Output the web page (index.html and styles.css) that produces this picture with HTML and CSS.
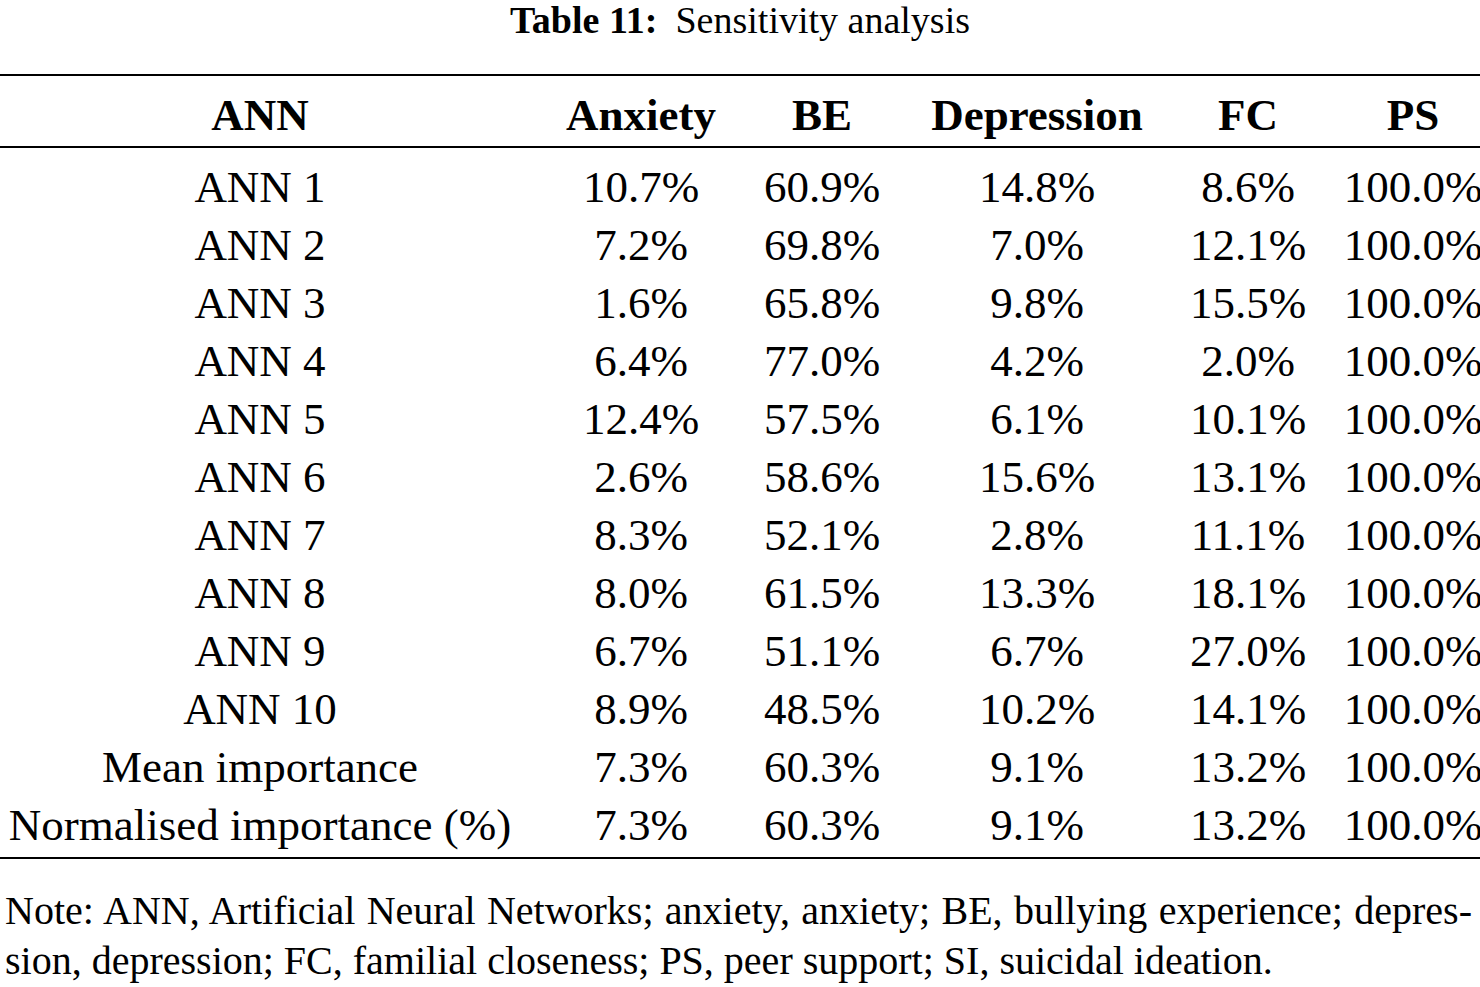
FILE: index.html
```html
<!DOCTYPE html>
<html lang="en">
<head>
<meta charset="utf-8">
<title>Table 11: Sensitivity analysis</title>
<link rel="stylesheet" href="styles.css">
</head>
<body>
<div class="title"><span class="label">Table 11:</span><span class="caption">Sensitivity analysis</span></div>
<div class="table">
  <div class="row head">
    <div class="cell">ANN</div><div class="cell">Anxiety</div><div class="cell">BE</div><div class="cell">Depression</div><div class="cell">FC</div><div class="cell last">PS</div>
  </div>
  <div class="body">
    <div class="row"><div class="cell">ANN 1</div><div class="cell">10.7%</div><div class="cell">60.9%</div><div class="cell">14.8%</div><div class="cell">8.6%</div><div class="cell last">100.0%</div></div>
    <div class="row"><div class="cell">ANN 2</div><div class="cell">7.2%</div><div class="cell">69.8%</div><div class="cell">7.0%</div><div class="cell">12.1%</div><div class="cell last">100.0%</div></div>
    <div class="row"><div class="cell">ANN 3</div><div class="cell">1.6%</div><div class="cell">65.8%</div><div class="cell">9.8%</div><div class="cell">15.5%</div><div class="cell last">100.0%</div></div>
    <div class="row"><div class="cell">ANN 4</div><div class="cell">6.4%</div><div class="cell">77.0%</div><div class="cell">4.2%</div><div class="cell">2.0%</div><div class="cell last">100.0%</div></div>
    <div class="row"><div class="cell">ANN 5</div><div class="cell">12.4%</div><div class="cell">57.5%</div><div class="cell">6.1%</div><div class="cell">10.1%</div><div class="cell last">100.0%</div></div>
    <div class="row"><div class="cell">ANN 6</div><div class="cell">2.6%</div><div class="cell">58.6%</div><div class="cell">15.6%</div><div class="cell">13.1%</div><div class="cell last">100.0%</div></div>
    <div class="row"><div class="cell">ANN 7</div><div class="cell">8.3%</div><div class="cell">52.1%</div><div class="cell">2.8%</div><div class="cell">11.1%</div><div class="cell last">100.0%</div></div>
    <div class="row"><div class="cell">ANN 8</div><div class="cell">8.0%</div><div class="cell">61.5%</div><div class="cell">13.3%</div><div class="cell">18.1%</div><div class="cell last">100.0%</div></div>
    <div class="row"><div class="cell">ANN 9</div><div class="cell">6.7%</div><div class="cell">51.1%</div><div class="cell">6.7%</div><div class="cell">27.0%</div><div class="cell last">100.0%</div></div>
    <div class="row"><div class="cell">ANN 10</div><div class="cell">8.9%</div><div class="cell">48.5%</div><div class="cell">10.2%</div><div class="cell">14.1%</div><div class="cell last">100.0%</div></div>
    <div class="row"><div class="cell">Mean importance</div><div class="cell">7.3%</div><div class="cell">60.3%</div><div class="cell">9.1%</div><div class="cell">13.2%</div><div class="cell last">100.0%</div></div>
    <div class="row"><div class="cell">Normalised importance (%)</div><div class="cell">7.3%</div><div class="cell">60.3%</div><div class="cell">9.1%</div><div class="cell">13.2%</div><div class="cell last">100.0%</div></div>
  </div>
</div>
<div class="note">
  <span class="line1">Note: ANN, Artificial Neural Networks; anxiety, anxiety; BE, bullying experience; depres-</span>
  <span class="line2">sion, depression; FC, familial closeness; PS, peer support; SI, suicidal ideation.</span>
</div>
</body>
</html>
```

FILE: styles.css
```css
html, body {
  margin: 0;
  padding: 0;
  background: #ffffff;
  color: #000000;
  font-family: "Liberation Serif", "DejaVu Serif", serif;
}

body {
  width: 1480px;
  height: 987px;
  overflow: hidden;
}

.title {
  height: 40px;
  line-height: 40px;
  font-size: 38px;
  text-align: center;
  white-space: nowrap;
}

.title .label {
  font-weight: bold;
}

.title .caption {
  margin-left: 18px;
}

.table {
  margin-top: 34px;
  border-top: 2px solid #000;
  border-bottom: 2px solid #000;
  font-size: 45px;
}

.row {
  display: grid;
  grid-template-columns: 520px 242px 120px 310px 112px 176px;
  height: 58px;
  line-height: 58px;
}

.row.head {
  font-weight: bold;
  height: 72px;
  padding-top: 10px;
  box-sizing: border-box;
  border-bottom: 2px solid #000;
}

.body {
  padding-top: 10px;
  padding-bottom: 3px;
}

.cell {
  display: flex;
  justify-content: center;
  white-space: nowrap;
}

.cell.last {
  padding-left: 42px;
}

.note {
  margin-top: 27px;
  padding-left: 5px;
  padding-right: 8px;
  font-size: 40px;
  line-height: 50px;
}

.note .line1 {
  display: block;
  text-align: justify;
  text-align-last: justify;
  white-space: nowrap;
}

.note .line2 {
  display: block;
  white-space: nowrap;
}
```
